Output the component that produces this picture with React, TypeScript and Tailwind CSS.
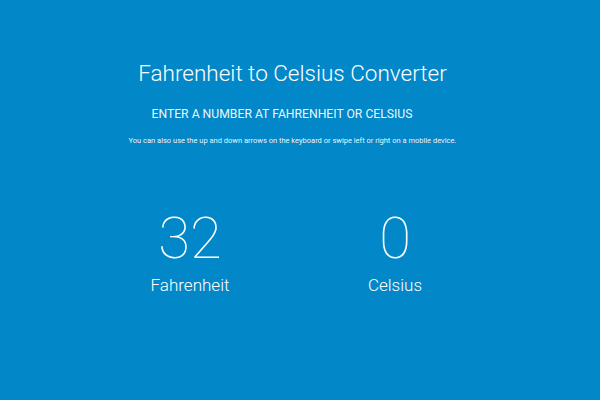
function App() {
  return (
    <div className="w-[600px] h-[400px] bg-[#0288c9] text-white font-['Roboto',sans-serif] overflow-hidden">
      <div className="flex flex-col items-center pr-[15px] pt-[58px]">
        <h1 className="text-[22.5px] font-light leading-[30px]">
          Fahrenheit to Celsius Converter
        </h1>
        <h2 className="mt-[18px] mr-[21px] text-[12.2px] font-normal leading-[16px] text-white/95">
          ENTER A NUMBER AT FAHRENHEIT OR CELSIUS
        </h2>
        <p className="mt-[14px] text-[7.5px] leading-[10px] text-white/95">
          You can also use the up and down arrows on the keyboard or swipe left or right on a mobile device.
        </p>
        <div className="mt-[62px] grid grid-cols-2 w-[410px]">
          <div className="flex flex-col items-center">
            <span className="text-[58px] font-thin leading-[60px]">32</span>
            <span className="mt-[7px] text-[17px] font-light leading-[20px]">Fahrenheit</span>
          </div>
          <div className="flex flex-col items-center">
            <span className="text-[58px] font-thin leading-[60px]">0</span>
            <span className="mt-[7px] text-[17px] font-light leading-[20px]">Celsius</span>
          </div>
        </div>
      </div>
    </div>
  );
}

export default App;
